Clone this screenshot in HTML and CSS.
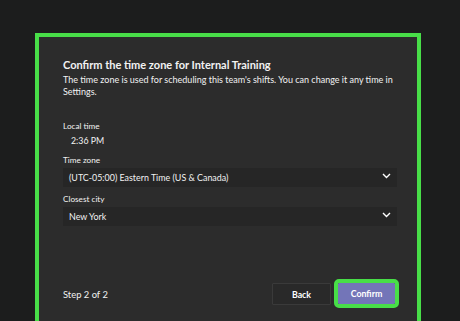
FILE: index.html
```html
<!DOCTYPE html>
<html lang="en">
<head>
    <meta charset="UTF-8">
    <meta name="viewport" content="width=device-width, initial-scale=1.0">
    <title>Confirm time zone</title>
    <link rel="stylesheet" href="styles.css">
</head>
<body>
    <div class="dialog">
        <h1 class="title">Confirm the time zone for Internal Training</h1>
        <p class="desc">The time zone is used for scheduling this team's shifts. You can change it any time in Settings.</p>

        <div class="field">
            <label class="label">Local time</label>
            <div class="value">2:36 PM</div>
        </div>

        <div class="field">
            <label class="label">Time zone</label>
            <div class="select">
                <span>(UTC-05:00) Eastern Time (US &amp; Canada)</span>
                <svg class="chevron" width="9" height="6" viewBox="0 0 9 6"><polyline points="1,1 4.5,4.5 8,1" fill="none" stroke="#fff" stroke-width="1.4"/></svg>
            </div>
        </div>

        <div class="field">
            <label class="label">Closest city</label>
            <div class="select">
                <span>New York</span>
                <svg class="chevron" width="9" height="6" viewBox="0 0 9 6"><polyline points="1,1 4.5,4.5 8,1" fill="none" stroke="#fff" stroke-width="1.4"/></svg>
            </div>
        </div>

        <div class="footer">
            <span class="step">Step 2 of 2</span>
            <div class="actions">
                <button class="btn btn-back">Back</button>
                <button class="btn btn-confirm">Confirm</button>
            </div>
        </div>
    </div>
</body>
</html>
```

FILE: styles.css
```css
body {
    margin: 0;
    height: 321px;
    overflow: hidden;
    background-color: #1c1d1d;
    font-family: Lato, "Liberation Sans", sans-serif;
    color: #f2f2f2;
}
.dialog {
    box-sizing: border-box;
    width: 386px;
    height: 300px;
    margin: 33px 0 0 35px;
    padding: 20px 20px 0 24px;
    background-color: #2c2c2c;
    border: 4px solid #48de48;
    border-bottom: none;
}
.title {
    margin: 0;
    font-size: 11px;
    font-weight: 700;
    line-height: 16px;
}
.desc {
    margin: 1px 0 0;
    font-size: 9px;
    line-height: 12px;
}
.field {
    margin-top: 6px;
}
.field:first-of-type {
    margin-top: 22px;
}
.label {
    display: block;
    font-size: 8.2px;
    line-height: 12px;
}
.value {
    padding-left: 8px;
    margin-top: 2px;
    font-size: 8.8px;
    line-height: 14px;
}
.select {
    display: flex;
    align-items: center;
    justify-content: space-between;
    height: 19px;
    margin-top: 2px;
    padding: 0 6px;
    background-color: #262626;
    font-size: 8.9px;
}
.chevron {
    margin-top: -3px;
}
.footer {
    display: flex;
    align-items: center;
    justify-content: space-between;
    margin-top: 57px;
    padding-right: 2px;
}
.step {
    font-size: 9.4px;
}
.actions {
    display: flex;
    gap: 7px;
}
.btn {
    height: 22px;
    border: none;
    border-radius: 1px;
    font-family: inherit;
    font-size: 8.8px;
    font-weight: 700;
    color: #fff;
    cursor: pointer;
}
.btn-back {
    width: 59px;
    background-color: #292929;
    border: 1px solid #3a3a3a;
}
.btn-confirm {
    width: 57px;
    height: 21px;
    background-color: #7375b8;
    outline: 4px solid #48de48;
}
```
